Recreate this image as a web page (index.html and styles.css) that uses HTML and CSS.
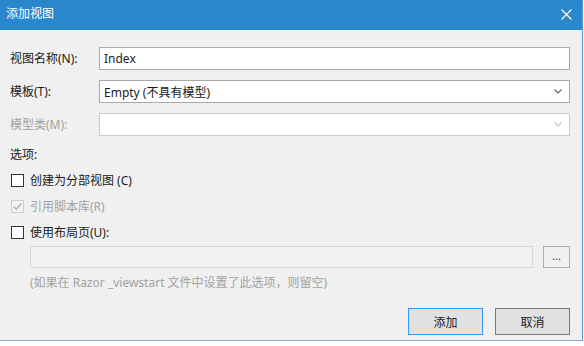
FILE: index.html
```html
<!DOCTYPE html>
<html lang="zh-CN">
<head>
    <meta charset="UTF-8">
    <title>添加视图</title>
    <link rel="stylesheet" href="styles.css">
</head>
<body>
    <div class="window">
        <div class="titlebar">
            <span class="title">添加视图</span>
            <svg class="close" width="11" height="11" viewBox="0 0 11 11">
                <path d="M0.5 0.5 L10.5 10.5 M10.5 0.5 L0.5 10.5" stroke="#ffffff" stroke-width="1.2" fill="none"/>
            </svg>
        </div>

        <div class="content">
            <div class="form-grid">
                <label class="field-label">视图名称(N):</label>
                <input class="text-box" type="text" value="Index">

                <label class="field-label">模板(T):</label>
                <div class="combo">
                    <span>Empty (不具有模型)</span>
                    <svg width="8" height="5" viewBox="0 0 8 5"><path d="M0.5 0.5 L4 4 L7.5 0.5" stroke="#606060" stroke-width="1.1" fill="none"/></svg>
                </div>

                <label class="field-label disabled">模型类(M):</label>
                <div class="combo combo-disabled">
                    <span></span>
                    <svg width="8" height="5" viewBox="0 0 8 5"><path d="M0.5 0.5 L4 4 L7.5 0.5" stroke="#c4c4c4" stroke-width="1.1" fill="none"/></svg>
                </div>
            </div>

            <div class="section-label">选项:</div>

            <div class="check-row">
                <span class="check-box"></span>
                <span>创建为分部视图 (C)</span>
            </div>
            <div class="check-row disabled">
                <span class="check-box checked">
                    <svg width="11" height="11" viewBox="0 0 11 11"><path d="M1.5 5.5 L4.2 8.2 L9.5 2.2" stroke="#b4b4b4" stroke-width="1.6" fill="none"/></svg>
                </span>
                <span>引用脚本库(R)</span>
            </div>
            <div class="check-row">
                <span class="check-box"></span>
                <span>使用布局页(U):</span>
            </div>

            <div class="layout-row">
                <input class="layout-box" type="text" disabled>
                <button class="browse-btn">...</button>
            </div>
            <div class="hint">(如果在 Razor _viewstart 文件中设置了此选项，则留空)</div>

            <div class="button-row">
                <button class="dlg-btn default">添加</button>
                <button class="dlg-btn">取消</button>
            </div>
        </div>
    </div>
</body>
</html>
```

FILE: styles.css
```css
body {
    margin: 0;
    background-color: #ffffff;
    font-family: "Noto Sans", "Noto Sans CJK SC", sans-serif;
    font-size: 12px;
    color: #1a1a1a;
}
.window {
    width: 582px;
    height: 340px;
    background-color: #f0f0f0;
    border-right: 1px solid #5b9bd5;
    border-bottom: 1px solid #8ea6c6;
    box-shadow: 0 3px 3px #dcdcdc;
}
.titlebar {
    height: 30px;
    background-color: #2b87cc;
    display: flex;
    align-items: center;
    justify-content: space-between;
    padding: 0 10px 0 6px;
    color: #ffffff;
}
.title {
    font-size: 12px;
    line-height: 16px;
    margin-top: -2px;
}
.close {
    margin-top: -1px;
}
.content {
    padding: 17px 12px 0 10px;
}
.form-grid {
    display: grid;
    grid-template-columns: 89px 1fr;
    grid-auto-rows: 23px;
    row-gap: 10px;
    align-items: center;
}
.field-label {
    line-height: 18px;
}
.disabled {
    color: #a2a2a2;
}
.text-box {
    box-sizing: border-box;
    height: 23px;
    width: 100%;
    margin: 0;
    border: 1px solid #a9a9a9;
    background: #ffffff;
    padding: 0 4px;
    font-family: inherit;
    font-size: 12px;
    color: #1a1a1a;
    outline: none;
}
.combo {
    box-sizing: border-box;
    height: 23px;
    border: 1px solid #a9a9a9;
    background: #ffffff;
    display: flex;
    align-items: center;
    justify-content: space-between;
    padding: 0 7px 0 4px;
}
.combo-disabled {
    border-color: #cbcbcb;
}
.section-label {
    margin-top: 10px;
    line-height: 18px;
}
.check-row {
    height: 26px;
    display: flex;
    align-items: center;
    gap: 6px;
    padding-left: 1px;
}
.section-label + .check-row {
    margin-top: 3px;
}
.check-box {
    box-sizing: border-box;
    width: 13px;
    height: 13px;
    border: 1px solid #333333;
    background: #ffffff;
    display: flex;
    align-items: center;
    justify-content: center;
}
.check-box.checked {
    border-color: #cccccc;
    background: #f3f3f3;
}
.layout-row {
    display: flex;
    gap: 10px;
    margin-top: 1px;
    padding-left: 20px;
}
.layout-box {
    box-sizing: border-box;
    flex: 1;
    height: 22px;
    margin: 0;
    border: 1px solid #d9d9d9;
    background: #f2f2f2;
}
.browse-btn {
    box-sizing: border-box;
    width: 27px;
    height: 22px;
    border: 1px solid #adadad;
    background: #f0f0f0;
    padding: 0 0 4px 0;
    font-family: inherit;
    font-size: 11px;
    color: #333333;
}
.hint {
    color: #a2a2a2;
    line-height: 18px;
    margin-top: 6px;
    padding-left: 20px;
}
.button-row {
    display: flex;
    justify-content: flex-end;
    gap: 12px;
    margin-top: 16px;
}
.dlg-btn {
    box-sizing: border-box;
    width: 75px;
    height: 27px;
    border: 1px solid #7a7a7a;
    background: #e1e1e1;
    font-family: inherit;
    font-size: 12px;
    color: #1a1a1a;
    padding: 0;
}
.dlg-btn.default {
    border-color: #3399ff;
}
```
